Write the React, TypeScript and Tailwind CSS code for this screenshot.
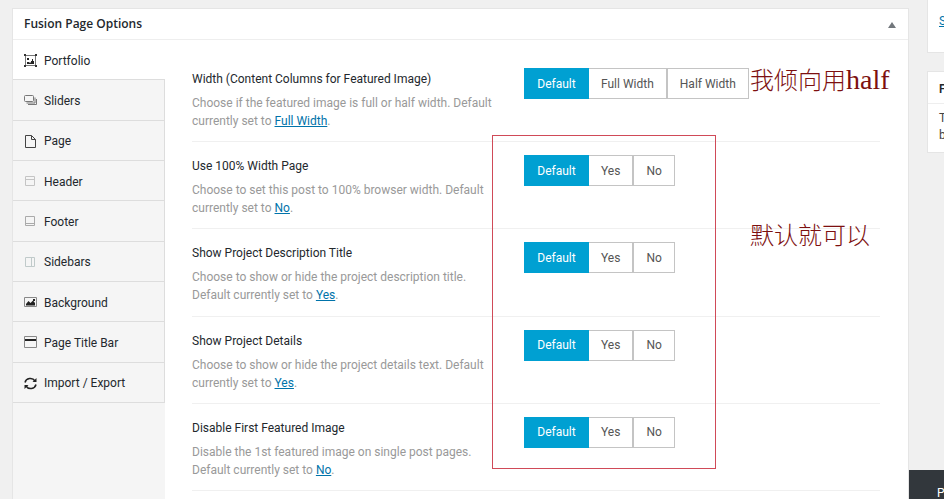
import React, { useState } from 'react';

type Tab = { name: string; icon: React.ReactNode };

const tabs: Tab[] = [
  {
    name: 'Portfolio',
    icon: (
      <g>
        <path d="M1.5 1.5h10v10h-10z" fill="none" stroke="#777" />
        <path d="M0 0h2v2H0zM11 0h2v2h-2zM0 11h2v2H0zM11 11h2v2h-2z" fill="#333" />
        <path d="M3 4h2v2H3zM3 10V8h2l1 1 1-1V7h1V5h1v2h1v3z" fill="#222" />
      </g>
    ),
  },
  {
    name: 'Sliders',
    icon: (
      <g fill="none" stroke="#777">
        <rect x="0.5" y="1.5" width="9" height="6" rx="1" />
        <path d="M11 3.5v5.5H2.5M12.5 5v5.500H4" />
      </g>
    ),
  },
  {
    name: 'Page',
    icon: <path d="M1.5 0.5h6l4 4v8h-10zM7.5 0.5v4h4" fill="none" stroke="#444" />,
  },
  {
    name: 'Header',
    icon: <path d="M1.5 1.5h9v9h-9zM1.5 4.500h9" fill="none" stroke="#c4c4c4" />,
  },
  {
    name: 'Footer',
    icon: <path d="M1.5 1.5h9v9h-9zM1.5 8.500h9" fill="none" stroke="#aaa" />,
  },
  {
    name: 'Sidebars',
    icon: <path d="M1.5 1.5h9v9h-9zM7.5 1.500v9" fill="none" stroke="#c0caca" />,
  },
  {
    name: 'Background',
    icon: (
      <g>
        <path d="M0.5 1.5h12v9H0.5z" fill="none" stroke="#888" />
        <path d="M2 9.500V8l2.500-3 2 2L9 4.500 11 7v2.500zM9 3h2v2H9z" fill="#222" />
      </g>
    ),
  },
  {
    name: 'Page Title Bar',
    icon: (
      <g>
        <path d="M0.5 0.5h12v11H0.5z" fill="none" stroke="#888" />
        <path d="M1 3h11v2H1z" fill="#222" />
      </g>
    ),
  },
  {
    name: 'Import / Export',
    icon: (
      <g fill="none" stroke="#222" strokeWidth="1.5">
        <path d="M1 5.500C2 1 8.500 0 11 4M12 7.500C11 12 4.500 13 2 9" />
        <path d="M12.500 1v4H8.500zM0.500 12V8h4z" fill="#222" stroke="none" />
      </g>
    ),
  },
];

type Option = {
  title: string;
  description: string;
  current: string;
  choices: string[];
};

const options: Option[] = [
  {
    title: 'Width (Content Columns for Featured Image)',
    description: 'Choose if the featured image is full or half width. Default currently set to',
    current: 'Full Width',
    choices: ['Default', 'Full Width', 'Half Width'],
  },
  {
    title: 'Use 100% Width Page',
    description: 'Choose to set this post to 100% browser width. Default currently set to',
    current: 'No',
    choices: ['Default', 'Yes', 'No'],
  },
  {
    title: 'Show Project Description Title',
    description: 'Choose to show or hide the project description title. Default currently set to',
    current: 'Yes',
    choices: ['Default', 'Yes', 'No'],
  },
  {
    title: 'Show Project Details',
    description: 'Choose to show or hide the project details text. Default currently set to',
    current: 'Yes',
    choices: ['Default', 'Yes', 'No'],
  },
  {
    title: 'Disable First Featured Image',
    description: 'Disable the 1st featured image on single post pages. Default currently set to',
    current: 'No',
    choices: ['Default', 'Yes', 'No'],
  },
];

const OptionRow: React.FC<{ option: Option }> = ({ option }) => {
  const [selected, setSelected] = useState(option.choices[0]);

  return (
    <div className="flex items-start border-b border-[#f0f0f0]">
      <div className="w-[304px] shrink-0 mr-7 pt-3.5">
        <h3 className="leading-5 text-[#23282d]">{option.title}</h3>
        <p className="mt-[5px] leading-[18px] text-[#999]">
          {option.description}{' '}
          <a href="#" className="text-[#0073aa] underline">{option.current}</a>.
        </p>
      </div>
      <div role="group" aria-label={option.title} className="flex pt-[13px]">
        {option.choices.map((choice) => (
          <button
            key={choice}
            type="button"
            aria-pressed={choice === selected}
            onClick={() => setSelected(choice)}
            className={
              choice === selected
                ? 'h-[31px] min-w-[65px] px-3 border border-[#00a0d2] bg-[#00a0d2] text-white'
                : 'h-[31px] px-3 border border-l-0 last:border-l border-[#c4c4c4] bg-white text-[#555]'
            }
          >
            {choice}
          </button>
        ))}
      </div>
    </div>
  );
};

const App: React.FC = () => {
  const [active, setActive] = useState('Portfolio');

  return (
    <div className="relative flex min-h-screen overflow-hidden bg-[#f0f0f0] pl-3 font-[Roboto,sans-serif] text-xs">
      <main className="relative mt-2 flex flex-1 flex-col border border-b-0 border-[#e5e5e5] bg-white">
        <header className="flex h-[31px] items-center justify-between border-b border-[#eee] px-[11px]">
          <h2 className="font-['Open_Sans',sans-serif] font-semibold text-[#23282d]">Fusion Page Options</h2>
          <button type="button" aria-label="Toggle panel" className="px-px pt-0.5">
            <svg width="8" height="6" viewBox="0 0 8 6">
              <path d="M4 0l4 6H0z" fill="#72777c" />
            </svg>
          </button>
        </header>

        <div className="flex flex-1">
          <nav className="w-[152px] shrink-0 bg-[#f5f5f5]">
            <div className="grid min-h-[363px] auto-rows-fr">
              {tabs.map((tab) => (
                <button
                  key={tab.name}
                  type="button"
                  onClick={() => setActive(tab.name)}
                  className={
                    tab.name === active
                      ? 'flex items-center gap-[7px] border-b border-[#ddd] bg-white pt-0.5 pl-[11px] text-[#23282d]'
                      : 'flex items-center gap-[7px] border-r border-b border-[#ddd] pt-0.5 pl-[11px] text-[#23282d]'
                  }
                >
                  <svg width="13" height="13" viewBox="0 0 13 13">{tab.icon}</svg>
                  {tab.name}
                </button>
              ))}
            </div>
          </nav>

          <section className="flex-1 pt-[15px] pr-7 pl-[27px]">
            <div className="grid min-h-[436px] auto-rows-fr">
              {options.map((option) => (
                <OptionRow key={option.title} option={option} />
              ))}
            </div>
          </section>
        </div>

        {/* review notes */}
        <div className="pointer-events-none absolute top-[126px] left-[479px] h-[334px] w-[224px] border border-[#d04a58]" />
        <p className="absolute top-[54px] left-[737px] flex items-baseline font-['Noto_Sans_CJK_SC',sans-serif] text-2xl leading-8 font-light whitespace-nowrap text-[#7d1010]">
          我倾向用<span className="font-['Liberation_Serif',serif] text-[28px]">half</span>
        </p>
        <p className="absolute top-[209px] left-[737px] font-['Noto_Sans_CJK_SC',sans-serif] text-2xl leading-8 font-light whitespace-nowrap text-[#7d1010]">
          默认就可以
        </p>
      </main>

      <aside className="ml-[18px] w-[17px] shrink-0 overflow-hidden text-[#444]">
        <div className="h-[53px] border-b border-l border-[#e5e5e5] bg-white pt-3 pl-[11px]">
          <a href="#" className="leading-[18px] text-[#0073aa] underline">S</a>
        </div>
        <div className="mt-[18px] border border-r-0 border-[#e5e5e5] bg-white">
          <h2 className="h-8 border-b border-[#eee] pl-[11px] leading-[34px] font-semibold text-[#23282d]">F</h2>
          <p className="pt-1.5 pb-2 pl-[11px] leading-[17px]">
            T<br />b
          </p>
        </div>
      </aside>

      <div className="absolute right-0 bottom-0 h-[29px] w-[35px] bg-[#32373c] pt-3.5 pl-7 leading-[18px] text-white">
        P
      </div>
    </div>
  );
};

export default App;
